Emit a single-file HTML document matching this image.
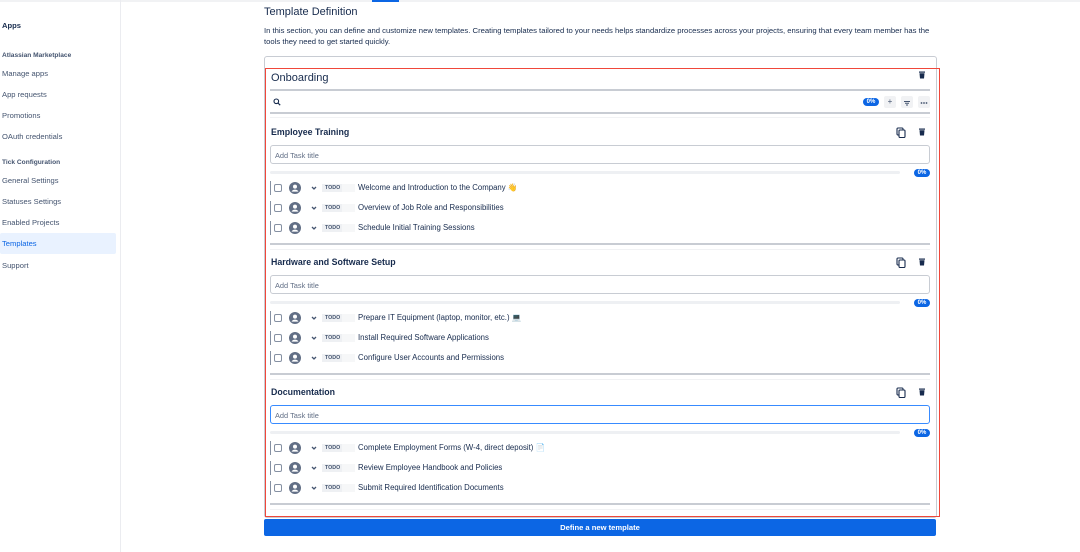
<!DOCTYPE html>
<html><head><meta charset="utf-8"><style>
*{box-sizing:border-box;margin:0;padding:0}
body{width:1080px;height:552px;overflow:hidden;background:#fff;font-family:"Liberation Sans",sans-serif;color:#172b4d;position:relative}
.a{position:absolute;white-space:nowrap}
.side{font-size:7.6px;color:#44546f;left:2px}
.sh{font-size:6.6px;font-weight:bold;color:#44546f;left:2px}
.sec{position:absolute;left:270px;width:660px;height:130px}
.sec .h{position:absolute;left:1px;top:-11px;font-size:8.8px;font-weight:bold}
.inp{position:absolute;left:0;top:7px;width:660px;height:19px;border:1px solid #c8ccd3;border-radius:3px;font-size:7.4px;color:#626f86;padding:5px 4px}
.bar{position:absolute;left:0;top:33px;width:630px;height:3px;background:#eef0f3;border-radius:2px}
.pill{position:absolute;left:644px;top:31px;width:16px;height:8px;background:#0c66e4;color:#fff;border-radius:4px;font-size:6px;font-weight:bold;text-align:center;line-height:8px}
.row{position:absolute;left:0;width:660px;height:14px}
.row .l{position:absolute;left:0;top:0;width:1.2px;height:14px;background:#8590a2}
.row .cb{position:absolute;left:4px;top:3px;width:8px;height:8px;border:1px solid #8590a2;border-radius:2px}
.row svg.av{position:absolute;left:19px;top:1px}
.row svg.ch{position:absolute;left:41px;top:5px}
.row .t{position:absolute;left:52px;top:3px;width:33px;height:8px;background:linear-gradient(90deg,#eef0f3 60%,#f6f7f8 60%);font-size:5.3px;font-weight:bold;color:#44546f;padding-left:3px;line-height:8px}
.row .tx{position:absolute;left:88px;top:2px;font-size:7.8px;color:#172b4d}
.sep{position:absolute;left:0;width:660px;height:1.5px;background:#c8ccd3}
.ic{position:absolute}
</style></head><body>
<div class="a" style="left:0;top:0;width:1080px;height:2px;background:#f1f2f4"></div>
<div class="a" style="left:372px;top:0;width:27px;height:2px;background:#0c66e4"></div>
<div class="a" style="left:120px;top:0;width:1px;height:552px;background:#ebecf0"></div>
<div class="a" style="left:2px;top:21px;font-size:7.6px;font-weight:bold">Apps</div>
<div class="a sh" style="top:52px">Atlassian Marketplace</div>
<div class="a side" style="top:69px">Manage apps</div>
<div class="a side" style="top:90px">App requests</div>
<div class="a side" style="top:111px">Promotions</div>
<div class="a side" style="top:132px">OAuth credentials</div>
<div class="a sh" style="top:159px">Tick Configuration</div>
<div class="a side" style="top:176px">General Settings</div>
<div class="a side" style="top:197px">Statuses Settings</div>
<div class="a side" style="top:218px">Enabled Projects</div>
<div class="a" style="left:0;top:233px;width:116px;height:21px;background:#e9f2ff;border-radius:2px"></div>
<div class="a side" style="top:239px;color:#0c66e4">Templates</div>
<div class="a side" style="top:261px">Support</div>

<div class="a" style="left:264px;top:6px;font-size:11px">Template Definition</div>
<div class="a" style="left:264px;top:26px;font-size:7.68px;color:#172b4d">In this section, you can define and customize new templates. Creating templates tailored to your needs helps standardize processes across your projects, ensuring that every team member has the</div>
<div class="a" style="left:264px;top:37px;font-size:7.68px">tools they need to get started quickly.</div>

<div class="a" style="left:264px;top:56px;width:673px;height:462px;border:1px solid #c8ccd3;border-radius:3px"></div>
<div class="a" style="left:265px;top:68px;width:675px;height:449px;border:1.5px solid #f0473a"></div>

<div class="a" style="left:271px;top:72px;font-size:11px">Onboarding</div>
<svg class="ic" style="left:918px;top:71px" width="8" height="8" viewBox="0 0 8 8"><rect x="1" y="0.5" width="6" height="1.2" fill="#172b4d"/><path d="M1.5 2.3h5l-.5 5.2h-4z" fill="#172b4d"/></svg>
<div class="a" style="left:270px;top:89px;width:660px;height:2px;background:#c8ccd3"></div>
<svg class="ic" style="left:273px;top:98px" width="8" height="8" viewBox="0 0 8 8"><circle cx="3.3" cy="3.3" r="2.3" fill="none" stroke="#172b4d" stroke-width="1.1"/><path d="M5 5l2.2 2.2" stroke="#172b4d" stroke-width="1.2"/></svg>
<div class="a" style="left:863px;top:98px;width:16px;height:8px;background:#0c66e4;color:#fff;border-radius:4px;font-size:6px;font-weight:bold;text-align:center;line-height:8px">0%</div>
<div class="a" style="left:884px;top:96px;width:12px;height:12px;background:#f1f2f4;border-radius:2px;font-size:8px;text-align:center;line-height:12px;color:#44546f">+</div>
<div class="a" style="left:901px;top:96px;width:12px;height:12px;background:#f1f2f4;border-radius:2px"><svg width="12" height="12"><path d="M3 4.5h6M4 6.3h4M5 8h2" stroke="#44546f" stroke-width="1"/></svg></div>
<div class="a" style="left:918px;top:96px;width:12px;height:12px;background:#f1f2f4;border-radius:2px"><svg width="12" height="12"><circle cx="3.5" cy="6" r=".9" fill="#44546f"/><circle cx="6" cy="6" r=".9" fill="#44546f"/><circle cx="8.5" cy="6" r=".9" fill="#44546f"/></svg></div>
<div class="a" style="left:270px;top:112px;width:660px;height:1.5px;background:#c8ccd3"></div>
<div class="a" style="left:270px;top:117px;width:660px;height:1px;background:#f1f2f4"></div>

<div class="sec" style="top:138px">
 <div class="h">Employee Training</div>
 <svg class="ic" style="left:626px;top:-11px" width="10" height="11" viewBox="0 0 10 11"><rect x="1" y="1" width="6" height="7" rx="1" fill="none" stroke="#172b4d" stroke-width="1.1"/><rect x="3" y="3" width="6" height="7.5" rx="1" fill="#fff" stroke="#172b4d" stroke-width="1.1"/></svg>
 <svg class="ic" style="left:648px;top:-10px" width="8" height="8" viewBox="0 0 8 8"><rect x="1" y="0.5" width="6" height="1.2" fill="#172b4d"/><path d="M1.5 2.3h5l-.5 5.2h-4z" fill="#172b4d"/></svg>
 <div class="inp">Add Task title</div>
 <div class="bar"></div><div class="pill">0%</div>
 <div class="row" style="top:43px"><div class="l"></div><div class="cb"></div><svg class="av" width="12" height="12" viewBox="0 0 12 12"><circle cx="6" cy="6" r="6" fill="#626f86"/><circle cx="6" cy="4.6" r="2" fill="#fff"/><path d="M2.6 9.6a3.6 3 0 0 1 6.8 0z" fill="#fff"/></svg><svg class="ch" width="6" height="4"><path d="M1 1l2 2 2-2" fill="none" stroke="#44546f" stroke-width="1.3"/></svg><div class="t">TODO</div><div class="tx">Welcome and Introduction to the Company 👋</div></div>
 <div class="row" style="top:63px"><div class="l"></div><div class="cb"></div><svg class="av" width="12" height="12" viewBox="0 0 12 12"><circle cx="6" cy="6" r="6" fill="#626f86"/><circle cx="6" cy="4.6" r="2" fill="#fff"/><path d="M2.6 9.6a3.6 3 0 0 1 6.8 0z" fill="#fff"/></svg><svg class="ch" width="6" height="4"><path d="M1 1l2 2 2-2" fill="none" stroke="#44546f" stroke-width="1.3"/></svg><div class="t">TODO</div><div class="tx">Overview of Job Role and Responsibilities</div></div>
 <div class="row" style="top:83px"><div class="l"></div><div class="cb"></div><svg class="av" width="12" height="12" viewBox="0 0 12 12"><circle cx="6" cy="6" r="6" fill="#626f86"/><circle cx="6" cy="4.6" r="2" fill="#fff"/><path d="M2.6 9.6a3.6 3 0 0 1 6.8 0z" fill="#fff"/></svg><svg class="ch" width="6" height="4"><path d="M1 1l2 2 2-2" fill="none" stroke="#44546f" stroke-width="1.3"/></svg><div class="t">TODO</div><div class="tx">Schedule Initial Training Sessions</div></div>
 <div class="sep" style="top:105px"></div>
 <div class="sep" style="top:111px;height:1px;background:#f1f2f4"></div>
</div>

<div class="sec" style="top:268px">
 <div class="h">Hardware and Software Setup</div>
 <svg class="ic" style="left:626px;top:-11px" width="10" height="11" viewBox="0 0 10 11"><rect x="1" y="1" width="6" height="7" rx="1" fill="none" stroke="#172b4d" stroke-width="1.1"/><rect x="3" y="3" width="6" height="7.5" rx="1" fill="#fff" stroke="#172b4d" stroke-width="1.1"/></svg>
 <svg class="ic" style="left:648px;top:-10px" width="8" height="8" viewBox="0 0 8 8"><rect x="1" y="0.5" width="6" height="1.2" fill="#172b4d"/><path d="M1.5 2.3h5l-.5 5.2h-4z" fill="#172b4d"/></svg>
 <div class="inp">Add Task title</div>
 <div class="bar"></div><div class="pill">0%</div>
 <div class="row" style="top:43px"><div class="l"></div><div class="cb"></div><svg class="av" width="12" height="12" viewBox="0 0 12 12"><circle cx="6" cy="6" r="6" fill="#626f86"/><circle cx="6" cy="4.6" r="2" fill="#fff"/><path d="M2.6 9.6a3.6 3 0 0 1 6.8 0z" fill="#fff"/></svg><svg class="ch" width="6" height="4"><path d="M1 1l2 2 2-2" fill="none" stroke="#44546f" stroke-width="1.3"/></svg><div class="t">TODO</div><div class="tx">Prepare IT Equipment (laptop, monitor, etc.) 💻</div></div>
 <div class="row" style="top:63px"><div class="l"></div><div class="cb"></div><svg class="av" width="12" height="12" viewBox="0 0 12 12"><circle cx="6" cy="6" r="6" fill="#626f86"/><circle cx="6" cy="4.6" r="2" fill="#fff"/><path d="M2.6 9.6a3.6 3 0 0 1 6.8 0z" fill="#fff"/></svg><svg class="ch" width="6" height="4"><path d="M1 1l2 2 2-2" fill="none" stroke="#44546f" stroke-width="1.3"/></svg><div class="t">TODO</div><div class="tx">Install Required Software Applications</div></div>
 <div class="row" style="top:83px"><div class="l"></div><div class="cb"></div><svg class="av" width="12" height="12" viewBox="0 0 12 12"><circle cx="6" cy="6" r="6" fill="#626f86"/><circle cx="6" cy="4.6" r="2" fill="#fff"/><path d="M2.6 9.6a3.6 3 0 0 1 6.8 0z" fill="#fff"/></svg><svg class="ch" width="6" height="4"><path d="M1 1l2 2 2-2" fill="none" stroke="#44546f" stroke-width="1.3"/></svg><div class="t">TODO</div><div class="tx">Configure User Accounts and Permissions</div></div>
 <div class="sep" style="top:105px"></div>
 <div class="sep" style="top:111px;height:1px;background:#f1f2f4"></div>
</div>

<div class="sec" style="top:398px">
 <div class="h">Documentation</div>
 <svg class="ic" style="left:626px;top:-11px" width="10" height="11" viewBox="0 0 10 11"><rect x="1" y="1" width="6" height="7" rx="1" fill="none" stroke="#172b4d" stroke-width="1.1"/><rect x="3" y="3" width="6" height="7.5" rx="1" fill="#fff" stroke="#172b4d" stroke-width="1.1"/></svg>
 <svg class="ic" style="left:648px;top:-10px" width="8" height="8" viewBox="0 0 8 8"><rect x="1" y="0.5" width="6" height="1.2" fill="#172b4d"/><path d="M1.5 2.3h5l-.5 5.2h-4z" fill="#172b4d"/></svg>
 <div class="inp" style="border-color:#388bff;border-width:1.5px">Add Task title</div>
 <div class="bar"></div><div class="pill">0%</div>
 <div class="row" style="top:43px"><div class="l"></div><div class="cb"></div><svg class="av" width="12" height="12" viewBox="0 0 12 12"><circle cx="6" cy="6" r="6" fill="#626f86"/><circle cx="6" cy="4.6" r="2" fill="#fff"/><path d="M2.6 9.6a3.6 3 0 0 1 6.8 0z" fill="#fff"/></svg><svg class="ch" width="6" height="4"><path d="M1 1l2 2 2-2" fill="none" stroke="#44546f" stroke-width="1.3"/></svg><div class="t">TODO</div><div class="tx">Complete Employment Forms (W-4, direct deposit) 📄</div></div>
 <div class="row" style="top:63px"><div class="l"></div><div class="cb"></div><svg class="av" width="12" height="12" viewBox="0 0 12 12"><circle cx="6" cy="6" r="6" fill="#626f86"/><circle cx="6" cy="4.6" r="2" fill="#fff"/><path d="M2.6 9.6a3.6 3 0 0 1 6.8 0z" fill="#fff"/></svg><svg class="ch" width="6" height="4"><path d="M1 1l2 2 2-2" fill="none" stroke="#44546f" stroke-width="1.3"/></svg><div class="t">TODO</div><div class="tx">Review Employee Handbook and Policies</div></div>
 <div class="row" style="top:83px"><div class="l"></div><div class="cb"></div><svg class="av" width="12" height="12" viewBox="0 0 12 12"><circle cx="6" cy="6" r="6" fill="#626f86"/><circle cx="6" cy="4.6" r="2" fill="#fff"/><path d="M2.6 9.6a3.6 3 0 0 1 6.8 0z" fill="#fff"/></svg><svg class="ch" width="6" height="4"><path d="M1 1l2 2 2-2" fill="none" stroke="#44546f" stroke-width="1.3"/></svg><div class="t">TODO</div><div class="tx">Submit Required Identification Documents</div></div>
 <div class="sep" style="top:105px"></div>
 <div class="sep" style="top:111px;height:1px;background:#f1f2f4"></div>
</div>

<div class="a" style="left:264px;top:519px;width:672px;height:17px;background:#0c66e4;border-radius:2px;color:#fff;font-size:7.6px;font-weight:bold;text-align:center;line-height:17px">Define a new template</div>
</body></html>
